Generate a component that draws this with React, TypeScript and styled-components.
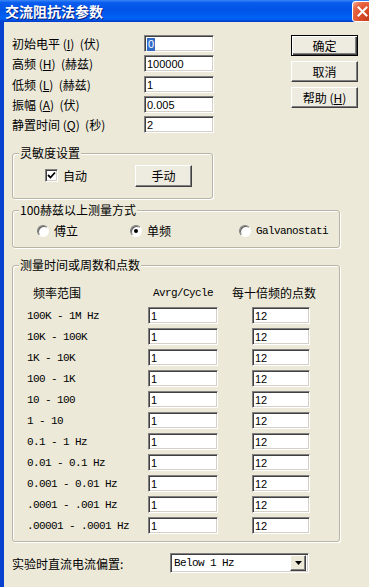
import React from 'react';
import styled, { createGlobalStyle } from 'styled-components';

const CN = `"Noto Sans CJK SC", "Liberation Sans", sans-serif`;
const MONO = `"Liberation Mono", "DejaVu Sans Mono", monospace`;

const Global = createGlobalStyle`
  html, body { margin: 0; padding: 0; overflow: hidden; background: #ECE9D8; }
  body { font-family: ${CN}; font-size: 12px; color: #000; }
  #root { width: 369px; height: 587px; overflow: hidden; }
`;

const Window = styled.div`
  width: 373px;
  height: 587px;
  display: flex;
  flex-direction: column;
`;

const TitleBar = styled.div`
  flex: none;
  height: 22px;
  display: flex;
  align-items: center;
  padding-left: 5px;
  background: linear-gradient(180deg, #3A86F8 0%, #0A5CEE 12%, #0054E6 45%, #0062F6 82%, #0058EA 90%, #0036C4 100%);
`;

const Title = styled.span`
  font-family: ${CN};
  font-size: 14px;
  font-weight: 700;
  color: #fff;
  line-height: 22px;
  text-shadow: 1px 1px 0 #0A1C7A;
`;

const Close = styled.div`
  margin-left: auto;
  width: 21px;
  height: 21px;
  box-sizing: border-box;
  border: 1px solid #fff;
  border-radius: 3px;
  background: radial-gradient(circle at 85% 85%, #C43A18 0, #E0522E 50%, #E86A48 75%, #F8B8A0 100%);
  display: flex;
  align-items: center;
  justify-content: center;
`;

const Frame = styled.div`
  flex: 1;
  display: flex;
  flex-direction: column;
  background: #ECE9D8;
  border-left: 4px solid;
  border-image: linear-gradient(to right, #0840D0, #1A62EC, #2A6EEE, #0A4ED8) 1;
  padding: 13px 0 0 8px;
`;

const Top = styled.div`
  display: flex;
  align-items: flex-start;
`;

const Form = styled.div`
  display: grid;
  grid-template-columns: 132px 70px;
  grid-auto-rows: 17px;
  row-gap: 3.25px;
  align-items: center;
`;

const FieldLabel = styled.span`
  font-size: 12px;
  line-height: 17px;
  white-space: pre;
`;

const TextBox = styled.div<{ $w?: number }>`
  box-sizing: border-box;
  height: 17px;
  width: ${p => p.$w ?? 70}px;
  background: #fff;
  border-style: solid;
  border-width: 1px;
  border-color: #808080 #fff #fff #808080;
  box-shadow: inset 1px 1px 0 #404040, inset -1px -1px 0 #D4D0C8;
  padding: 1px 0 0 2px;
  font-family: "Liberation Sans", sans-serif;
  font-size: 11px;
  line-height: 14px;
  white-space: nowrap;
  overflow: hidden;
`;

const Selected = styled.span`
  display: inline-block;
  background: #316AC5;
  color: #fff;
  padding: 0 1px;
  line-height: 13px;
`;

const ButtonCol = styled.div`
  display: flex;
  flex-direction: column;
  gap: 5px;
  margin-left: 77px;
`;

const Btn = styled.div<{ $default?: boolean; $w?: number; $h?: number }>`
  box-sizing: border-box;
  width: ${p => p.$w ?? 67}px;
  height: ${p => p.$h ?? 21}px;
  display: flex;
  align-items: center;
  justify-content: center;
  background: #EEEBE0;
  font-size: 12px;
  white-space: pre;
  border: 1px solid;
  border-color: ${p => (p.$default ? '#000' : '#fff #404040 #404040 #fff')};
  box-shadow: ${p =>
    p.$default
      ? 'inset 1px 1px 0 #fff, inset -1px -1px 0 #404040, inset -2px -2px 0 #808080'
      : 'inset -1px -1px 0 #808080'};
`;

const Key = styled.u`
  text-decoration: underline;
`;

const Group = styled.fieldset<{ $w: number; $h: number; $mt: number }>`
  box-sizing: border-box;
  width: ${p => p.$w}px;
  height: ${p => p.$h}px;
  margin: ${p => p.$mt}px 0 0 0;
  padding: 0;
  min-width: 0;
  border: 1px solid #B8B5A6;
  border-radius: 3px;
  box-shadow: inset 1px 1px 0 #fff, 1px 1px 0 #fff;
`;

const Legend = styled.legend`
  padding: 0 1px;
  margin-left: 6px;
  font-size: 12px;
  line-height: 14px;
  background: #ECE9D8;
`;

const SensRow = styled.div`
  display: flex;
  align-items: center;
  padding: 4px 0 0 32px;
  height: 23px;
`;

const CheckItem = styled.div`
  display: flex;
  align-items: center;
  gap: 5px;
  width: 90px;
`;

const CheckBox = styled.span`
  box-sizing: border-box;
  width: 13px;
  height: 13px;
  background: #fff;
  border: 1px solid;
  border-color: #808080 #fff #fff #808080;
  box-shadow: inset 1px 1px 0 #404040, inset -1px -1px 0 #D4D0C8;
  display: flex;
  align-items: center;
  justify-content: center;
`;

const RadioRow = styled.div`
  display: flex;
  align-items: center;
  padding: 7px 0 0 24px;
  height: 13px;
`;

const RadioItem = styled.div<{ $w?: number }>`
  display: flex;
  align-items: center;
  gap: 5px;
  width: ${p => (p.$w ? `${p.$w}px` : 'auto')};
`;

const Radio = styled.span<{ $on?: boolean }>`
  box-sizing: border-box;
  width: 12px;
  height: 12px;
  border-radius: 50%;
  border: 1px solid;
  border-color: #808080 #fff #fff #808080;
  background: radial-gradient(circle at 65% 65%, #fff 45%, #E4E2D8 100%);
  box-shadow: inset 1px 1px 0 #606060;
  display: flex;
  align-items: center;
  justify-content: center;
  &::after {
    content: '';
    display: ${p => (p.$on ? 'block' : 'none')};
    width: 4px;
    height: 4px;
    border-radius: 50%;
    background: #000;
  }
`;

const MonoText = styled.span`
  font-family: ${MONO};
  font-size: 11px;
  letter-spacing: -0.6px;
  white-space: nowrap;
`;

const Table = styled.div`
  display: grid;
  grid-template-columns: 121px 104px 58px;
  grid-template-rows: 17px;
  grid-auto-rows: 17px;
  row-gap: 4px;
  align-items: center;
  padding: 14px 0 0 14px;
`;

const HeadCN = styled.span<{ $shift?: number }>`
  align-self: start;
  font-size: 12px;
  line-height: 14px;
  white-space: nowrap;
  margin-left: ${p => p.$shift ?? 0}px;
`;

const HeadMono = styled(MonoText)`
  align-self: start;
  line-height: 14px;
  width: 70px;
  text-align: center;
`;

const BottomRow = styled.div`
  display: flex;
  align-items: center;
  margin-top: 11px;
`;

const BottomLabel = styled.span`
  width: 158px;
  font-size: 12px;
  white-space: nowrap;
`;

const Combo = styled.div`
  box-sizing: border-box;
  width: 139px;
  height: 20px;
  background: #fff;
  display: flex;
  align-items: center;
  border: 1px solid;
  border-color: #808080 #fff #fff #808080;
  box-shadow: inset 1px 1px 0 #404040, inset -1px -1px 0 #D4D0C8;
  padding: 0 2px 0 3px;
`;

const ComboText = styled(MonoText)`
  flex: 1;
`;

const ComboBtn = styled.div`
  box-sizing: border-box;
  width: 16px;
  height: 16px;
  background: #ECE9D8;
  border: 1px solid;
  border-color: #fff #404040 #404040 #fff;
  box-shadow: inset -1px -1px 0 #808080;
  display: flex;
  align-items: center;
  justify-content: center;
`;

const params: { label: React.ReactNode; value: React.ReactNode }[] = [
  { label: <>初始电平 (<Key>I</Key>)  (伏)</>, value: <Selected>0</Selected> },
  { label: <>高频 (<Key>H</Key>)  (赫兹)</>, value: '100000' },
  { label: <>低频 (<Key>L</Key>)  (赫兹)</>, value: '1' },
  { label: <>振幅 (<Key>A</Key>)  (伏)</>, value: '0.005' },
  { label: <>静置时间 (<Key>Q</Key>)  (秒)</>, value: '2' },
];

const ranges = [
  '100K - 1M Hz',
  '10K - 100K',
  '1K - 10K',
  '100 - 1K',
  '10 - 100',
  '1 - 10',
  '0.1 - 1 Hz',
  '0.01 - 0.1 Hz',
  '0.001 - 0.01 Hz',
  '.0001 - .001 Hz',
  '.00001 - .0001 Hz',
];

export default function App() {
  return (
    <>
      <Global />
      <Window>
        <TitleBar>
          <Title>交流阻抗法参数</Title>
          <Close>
            <svg width="11" height="11" viewBox="0 0 11 11">
              <path d="M1.5 1.5 L9.5 9.5 M9.5 1.5 L1.5 9.5" stroke="#fff" strokeWidth="2" strokeLinecap="square" />
            </svg>
          </Close>
        </TitleBar>
        <Frame>
          <Top>
            <Form>
              {params.map((p, i) => (
                <React.Fragment key={i}>
                  <FieldLabel>{p.label}</FieldLabel>
                  <TextBox>{p.value}</TextBox>
                </React.Fragment>
              ))}
            </Form>
            <ButtonCol>
              <Btn $default>确定</Btn>
              <Btn>取消</Btn>
              <Btn>帮助 (<Key>H</Key>)</Btn>
            </ButtonCol>
          </Top>

          <Group $w={201} $h={53} $mt={13}>
            <Legend>灵敏度设置</Legend>
            <SensRow>
              <CheckItem>
                <CheckBox>
                  <svg width="9" height="9" viewBox="0 0 9 9">
                    <path d="M1 4 L3.5 6.5 L8 1.5" stroke="#000" strokeWidth="1.8" fill="none" />
                  </svg>
                </CheckBox>
                <span>自动</span>
              </CheckItem>
              <Btn $w={57} $h={22}>手动</Btn>
            </SensRow>
          </Group>

          <Group $w={328} $h={45} $mt={4}>
            <Legend>100赫兹以上测量方式</Legend>
            <RadioRow>
              <RadioItem $w={93}>
                <Radio />
                <span>傅立</span>
              </RadioItem>
              <RadioItem $w={109}>
                <Radio $on />
                <span>单频</span>
              </RadioItem>
              <RadioItem>
                <Radio />
                <MonoText>Galvanostati</MonoText>
              </RadioItem>
            </RadioRow>
          </Group>

          <Group $w={328} $h={284} $mt={10}>
            <Legend>测量时间或周数和点数</Legend>
            <Table>
              <HeadCN $shift={6}>频率范围</HeadCN>
              <HeadMono>Avrg/Cycle</HeadMono>
              <HeadCN $shift={-20}>每十倍频的点数</HeadCN>
              {ranges.map(r => (
                <React.Fragment key={r}>
                  <MonoText>{r}</MonoText>
                  <TextBox $w={70}>1</TextBox>
                  <TextBox $w={58}>12</TextBox>
                </React.Fragment>
              ))}
            </Table>
          </Group>

          <BottomRow>
            <BottomLabel>实验时直流电流偏置:</BottomLabel>
            <Combo>
              <ComboText>Below 1 Hz</ComboText>
              <ComboBtn>
                <svg width="7" height="4" viewBox="0 0 7 4">
                  <path d="M0 0 H7 L3.5 4 Z" fill="#000" />
                </svg>
              </ComboBtn>
            </Combo>
          </BottomRow>
        </Frame>
      </Window>
    </>
  );
}
